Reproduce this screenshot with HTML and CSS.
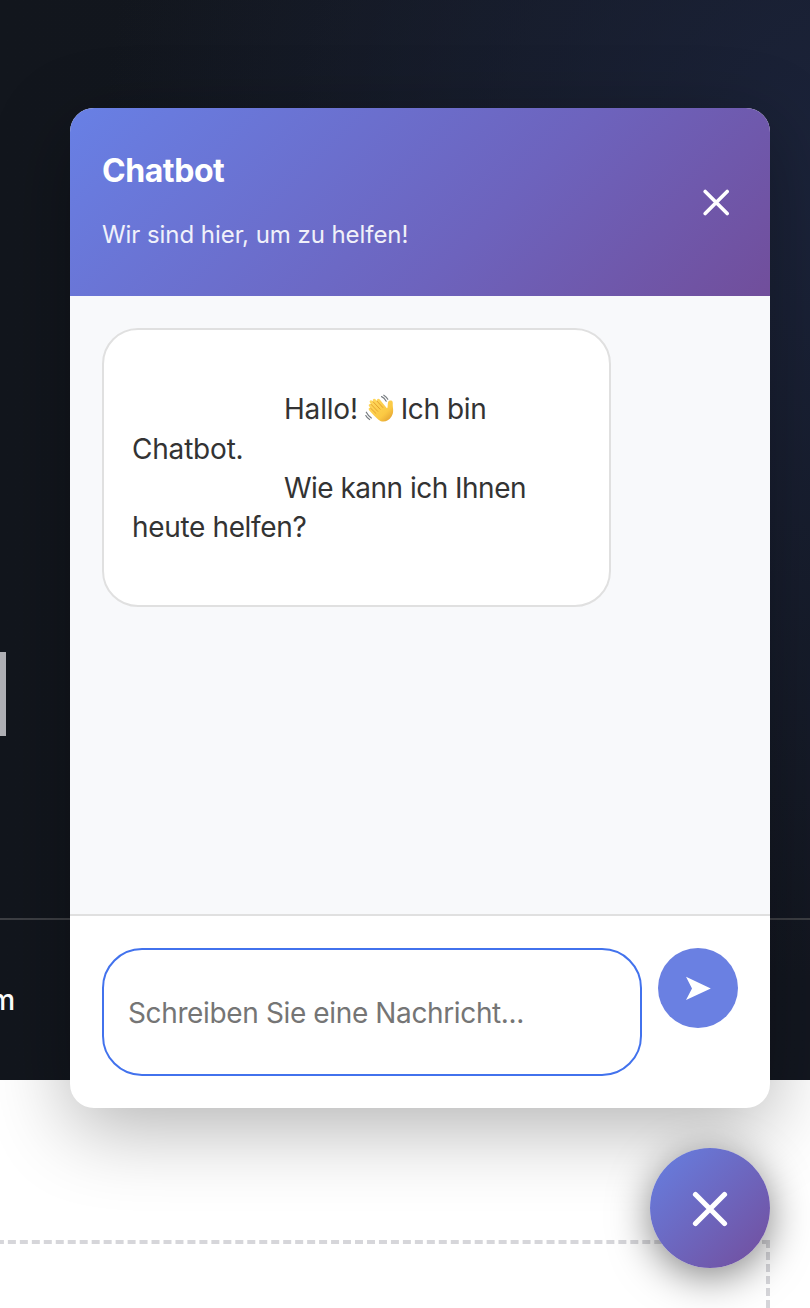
FILE: index.html
```html
<!DOCTYPE html>
<html lang="de">
<head>
<meta charset="utf-8">
<title>Chatbot</title>
<link rel="stylesheet" href="styles.css">
</head>
<body>
<main class="page">
  <section class="hero">
    <div class="hero-main"><span class="hero-block"></span></div>
    <div class="hero-foot"><span class="hero-label">m</span></div>
  </section>
  <section class="content"><div class="dropzone"></div></section>
</main>

<aside class="chat">
  <header class="chat-header">
    <div class="chat-heading">
      <h3 class="chat-title">Chatbot</h3>
      <p class="chat-subtitle">Wir sind hier, um zu helfen!</p>
    </div>
    <button class="chat-close" aria-label="Schließen">
      <svg width="28" height="28" viewBox="0 0 28 28"><path d="M3.2 3.5L25.2 25.5M25.2 3.5L3.2 25.5" stroke="#fff" stroke-width="3.6" stroke-linecap="round"/></svg>
    </button>
  </header>
  <div class="chat-messages">
    <div class="bubble">
<span class="indent"></span><span class="hallo">Hallo!</span><svg class="wave" width="30" height="30" viewBox="0 0 30 30">
  <defs><linearGradient id="skin" x1="0" y1="0" x2="1" y2="1"><stop offset="0" stop-color="#ffda60"/><stop offset=".65" stop-color="#fbc943"/><stop offset="1" stop-color="#dc962c"/></linearGradient></defs>
  <path d="M4.1 12.3C2.9 10.6 4.7 9.2 6.1 10.4L5 8.8C3.8 6.9 5.9 5.3 7.4 7L8.2 7.8C6.7 5.4 9.1 3.7 10.7 5.5L12.2 7.2C11.2 4.9 13.4 3.7 14.8 5.5L21.9 14.2C22.7 14.2 22.6 12.4 22.8 10C22.9 6.9 24.3 6 26.2 6.6C28.3 7.2 27.7 9.4 27.8 12C28 15.6 29 18.5 26.5 22.5C23.2 27.9 17.3 29 13.5 25.7C10.5 23.2 6.2 18.9 4.3 16.5C2.8 14.5 4.3 12.8 5.8 14.3Z" fill="url(#skin)"/>
  <path d="M6.1 10.4L12.7 17.3M8.1 7.8L15.1 15.2M12.1 7.2L17.8 13.5M5.5 14.1L10.9 19.4" fill="none" stroke="#e29b2b" stroke-width=".9" stroke-linecap="round"/>
  <path d="M16.6 2.6Q19.2 3.7 21.2 7.2M18.8 1.2Q21.5 2.7 22.8 5.3M1.3 18.2Q3 21.5 6.3 24M.8 21.6Q2 24.1 4.6 25.5" fill="none" stroke="#777c80" stroke-width="1.2" stroke-linecap="round"/>
</svg><span class="ich">Ich bin</span>
<span class="l2">Chatbot.</span>
<span class="indent"></span><span class="l3">Wie kann ich Ihnen</span>
<span class="l4">heute helfen?</span>

</div>
  </div>
  <form class="chat-form">
    <div class="chat-input"><span class="placeholder">Schreiben Sie eine Nachricht...</span></div>
    <button class="chat-send" type="button" aria-label="Senden">
      <svg width="26" height="26" viewBox="0 0 26 26"><path d="M1 1.7L25.8 13.5L1 25L7 13.5Z" fill="#fff"/></svg>
    </button>
  </form>
</aside>

<button class="launcher" aria-label="Chat schließen">
  <svg width="38" height="38" viewBox="0 0 38 38"><path d="M4.5 5.5L33.5 34.5M33.5 5.5L4.5 34.5" stroke="#fff" stroke-width="5.2" stroke-linecap="round"/></svg>
</button>
</body>
</html>
```

FILE: styles.css
```css
* { box-sizing: border-box; }
body { margin: 0; font-family: Inter, "Liberation Sans", sans-serif; background: #fff; overflow: hidden; }
button { border: 0; padding: 0; background: none; }
svg { display: block; }

.page { height: 1308px; display: flex; flex-direction: column; overflow: hidden; }
.hero {
  height: 1080px; flex: none; display: flex; flex-direction: column;
  background:
    radial-gradient(ellipse 760px 800px at 860px 180px, rgba(28, 36, 60, .95), rgba(28, 36, 60, 0)),
    linear-gradient(90deg, #12161d, #131720);
}
.hero-main { height: 920px; padding-top: 652px; border-bottom: 2px solid #3d3f44; }
.hero-block { display: block; width: 6px; height: 84px; background: #b1b2b7; }
.hero-foot { flex: 1; padding-top: 62px; }
.hero-label { display: block; width: 15px; direction: rtl; color: #fff; font-size: 28px; line-height: 36px; font-weight: 450; }
.content { flex: 1; padding: 160px 40px 0 0; }
.dropzone { height: 200px; margin-left: -40px; border: 4px dashed #d6d6da; }

.chat {
  position: absolute; left: 70px; top: 108px; width: 700px; height: 1000px;
  display: flex; flex-direction: column; overflow: hidden;
  background: #fff; border-radius: 24px; box-shadow: 0 20px 80px rgba(0, 0, 0, .3);
}
.chat-header {
  height: 188px; flex: none; padding: 0 40px 0 32px;
  display: flex; justify-content: space-between; align-items: center;
  color: #fff; background: linear-gradient(135deg, #6880e5, #6d63bd 60%, #714e9b);
}
.chat-heading { display: flex; flex-direction: column; gap: 24px; padding-top: 2px; }
.chat-title { margin: 0; font-size: 32px; line-height: 40px; font-weight: 700; letter-spacing: -.45px; white-space: nowrap; }
.chat-subtitle { margin: 0; font-size: 24px; line-height: 40px; font-weight: 430; letter-spacing: -.06px; opacity: .9; white-space: nowrap; }

.chat-messages { flex: 1; padding: 32px; background: #f8f9fb; }
.bubble {
  width: 509px; height: 279px; padding: 21px 28px 19px;
  background: #fff; border: 2px solid #e0e0e0; border-radius: 36px;
  color: #333; font-size: 28px; line-height: 39.3px; font-weight: 430; white-space: pre;
}
.indent { display: inline-block; width: 152px; }
.wave { display: inline-block; vertical-align: -5px; margin: -4px 6px 0 7px; }
.hallo, .l2 { letter-spacing: -.2px; }
.ich { letter-spacing: -.4px; }
.l3 { letter-spacing: -.52px; }
.l4 { letter-spacing: -.35px; }

.chat-form { height: 194px; flex: none; padding: 32px; display: flex; gap: 16px; border-top: 2px solid #e0e0e0; }
.chat-input {
  width: 540px; height: 128px; padding: 2px 24px 0; display: flex; align-items: center;
  border: 2px solid #4272ed; border-radius: 40px; color: #757575; font-size: 28px; font-weight: 430; white-space: nowrap;
}
.placeholder { letter-spacing: -.37px; }
.chat-send { width: 80px; height: 80px; border-radius: 50%; background: #6a80e2; display: grid; place-items: center; }

.launcher {
  position: absolute; left: 650px; top: 1148px; width: 120px; height: 120px;
  display: grid; place-items: center; border-radius: 50%;
  background: linear-gradient(135deg, #6680e2, #734d9c);
  box-shadow: 0 8px 40px rgba(0, 0, 0, .5);
}
```
